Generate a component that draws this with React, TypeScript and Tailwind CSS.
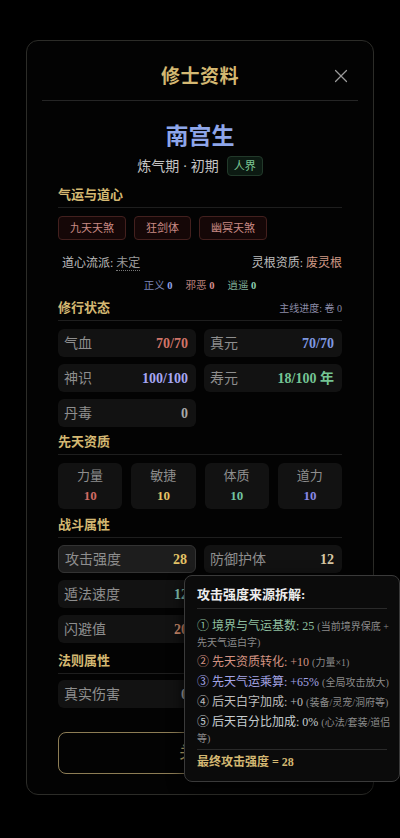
import React from 'react';
import { X } from 'lucide-react';

const FONT = { fontFamily: '"Liberation Serif", "Noto Sans CJK SC", serif' };

interface StatProps {
  label: string;
  value?: string;
  valueClass?: string;
  highlight?: boolean;
}

const StatCard: React.FC<StatProps> = ({ label, value, valueClass = '', highlight }) => (
  <div
    className={`h-[28px] rounded-md flex items-center justify-between pl-[6px] pr-2 ${
      highlight ? 'bg-[#1d1d1d] border border-[#333]' : 'bg-[#121212]'
    }`}
  >
    <span className="text-[14px] text-[#8e8e8e]">{label}</span>
    {value && <span className={`text-[14px] font-bold ${valueClass}`}>{value}</span>}
  </div>
);

const SectionTitle: React.FC<{ title: string; right?: React.ReactNode; className?: string }> = ({
  title,
  right,
  className = '',
}) => (
  <div className={`flex items-end justify-between border-b border-[#1e1e1e] pb-[3px] ${className}`}>
    <span className="text-[13px] leading-[18px] font-bold text-[#d4b872]">{title}</span>
    {right}
  </div>
);

const AptCard: React.FC<{ label: string; valueClass: string }> = ({ label, valueClass }) => (
  <div className="h-[46px] rounded-md bg-[#121212] flex flex-col items-center justify-center">
    <span className="text-[13px] leading-[18px] text-[#8e8e8e]">{label}</span>
    <span className={`text-[13px] leading-[18px] font-bold mt-[2px] ${valueClass}`}>10</span>
  </div>
);

const Line: React.FC<{ color: string; main: string; note: string }> = ({ color, main, note }) => (
  <p className={`text-[12px] leading-[16px] ${color}`}>
    {main} <span className="text-[10px] leading-[0px] text-[#8a8a8a]">{note}</span>
  </p>
);

export default function App() {
  return (
    <div className="w-[400px] h-[838px] bg-black relative overflow-hidden" style={FONT}>
      {/* Modal */}
      <div className="absolute left-[26px] top-[40px] w-[348px] h-[755px] rounded-xl border border-[#2c2c28] bg-[#030303] px-[15px]">
        {/* Header */}
        <div className="relative h-[60px] flex items-end justify-center pb-[11px] border-b border-[#252525]">
          <h2 className="text-[19px] leading-[24px] font-bold text-[#d4b872] tracking-wide">修士资料</h2>
          <X size={22} strokeWidth={1.3} className="absolute right-[6px] top-[24px] text-[#9a9a9a]" />
        </div>

        <div className="px-4">
          {/* Name */}
          <div className="mt-[22px] text-center text-[23px] leading-[28px] font-bold text-[#8ea6ea]">南宫生</div>
          <div className="mt-[5px] flex items-center justify-center gap-2 h-[20px]">
            <span className="text-[14px] text-[#c4c4c4]">炼气期 · 初期</span>
            <span className="text-[11px] leading-[16px] px-[6px] py-[1px] rounded border border-[#22392a] bg-[#0c1a12] text-[#7cc994]">
              人界
            </span>
          </div>

          {/* 气运与道心 */}
          <SectionTitle title="气运与道心" className="mt-[10px]" />
          <div className="mt-[8px] flex gap-2">
            {['九天天煞', '狂剑体', '幽冥天煞'].map(t => (
              <span
                key={t}
                className="h-[24px] px-[11px] flex items-center rounded border border-[#43201e] bg-[#150707] text-[11px] text-[#c98a84]"
              >
                {t}
              </span>
            ))}
          </div>
          <div className="mt-[13px] h-[20px] flex items-center justify-between pl-1 text-[12px]">
            <span className="text-[#bdbdbd]">
              道心流派: <span className="text-[#9a9a9a] border-b border-dotted border-[#777]">未定</span>
            </span>
            <span className="text-[#bdbdbd]">
              灵根资质: <span className="text-[#d29a86]">废灵根</span>
            </span>
          </div>
          <div className="mt-[5px] h-[16px] flex items-center justify-center gap-[13px] text-[10.5px]">
            <span className="text-[#7c86b8]">
              正义 <b className="text-[#93a5ec]">0</b>
            </span>
            <span className="text-[#b8807c]">
              邪恶 <b className="text-[#d89090]">0</b>
            </span>
            <span className="text-[#7ca892]">
              逍遥 <b className="text-[#8ed0b0]">0</b>
            </span>
          </div>

          {/* 修行状态 */}
          <SectionTitle
            title="修行状态"
            className="mt-[5px]"
            right={<span className="text-[10px] leading-[16px] text-[#8c8ca8]">主线进度: 卷 0</span>}
          />
          <div className="mt-[8px] grid grid-cols-2 gap-x-[8px] gap-y-[7px]">
            <StatCard label="气血" value="70/70" valueClass="text-[#d07468]" />
            <StatCard label="真元" value="70/70" valueClass="text-[#7f98e0]" />
            <StatCard label="神识" value="100/100" valueClass="text-[#a6a6f2]" />
            <StatCard label="寿元" value="18/100 年" valueClass="text-[#74c494]" />
            <StatCard label="丹毒" value="0" valueClass="text-[#a8a8a8]" />
          </div>

          {/* 先天资质 */}
          <SectionTitle title="先天资质" className="mt-[6px]" />
          <div className="mt-[8px] grid grid-cols-4 gap-[9px]">
            <AptCard label="力量" valueClass="text-[#d06a64]" />
            <AptCard label="敏捷" valueClass="text-[#e4c264]" />
            <AptCard label="体质" valueClass="text-[#72c4a0]" />
            <AptCard label="道力" valueClass="text-[#8888e6]" />
          </div>

          {/* 战斗属性 */}
          <SectionTitle title="战斗属性" className="mt-[7px]" />
          <div className="mt-[7px] grid grid-cols-2 gap-x-[8px] gap-y-[7px]">
            <StatCard label="攻击强度" value="28" valueClass="text-[#e2c266]" highlight />
            <StatCard label="防御护体" value="12" valueClass="text-[#d8c8a4]" />
            <StatCard label="遁法速度" value="12" valueClass="text-[#86c4b4]" />
            <div />
            <StatCard label="闪避值" value="20" valueClass="text-[#d08a6a]" />
          </div>

          {/* 法则属性 */}
          <SectionTitle title="法则属性" className="mt-[9px]" />
          <div className="mt-[6px] grid grid-cols-2 gap-x-[8px]">
            <StatCard label="真实伤害" value="0" valueClass="text-[#a8a8a8]" />
          </div>

          <button className="mt-[24px] w-full h-[42px] rounded-lg border border-[#8d7d55] text-[16px] text-[#d4b872] tracking-[0.3em]">
            关闭
          </button>
        </div>
      </div>

      {/* Tooltip */}
      <div className="absolute left-[184px] top-[575px] w-[216px] rounded-lg border border-[#3a3a3a] bg-[#0b0b0b] pl-[12px] pr-[6px] pt-[9px] pb-[10px] shadow-[0_4px_16px_rgba(0,0,0,0.8)]">
        <div className="text-[13px] leading-[20px] font-bold text-[#ececec] border-b border-[#2a2a2a] pb-[3px] mr-[6px]">
          攻击强度来源拆解:
        </div>
        <div className="mt-[9px] space-y-[4px]">
          <Line color="text-[#8fc0a0]" main="① 境界与气运基数: 25" note="(当前境界保底 + 先天气运白字)" />
          <Line color="text-[#d39282]" main="② 先天资质转化: +10" note="(力量×1)" />
          <Line color="text-[#a4a4e6]" main="③ 先天气运乘算: +65%" note="(全局攻击放大)" />
          <Line color="text-[#bcbcbc]" main="④ 后天白字加成: +0" note="(装备/灵宠/洞府等)" />
          <Line color="text-[#c6cdd0]" main="⑤ 后天百分比加成: 0%" note="(心法/套装/道侣等)" />
        </div>
        <div className="mt-[3px] mr-[6px] pt-[3px] border-t border-[#2a2a2a] text-[12px] leading-[18px] font-bold text-[#d4b872]">
          最终攻击强度 = 28
        </div>
      </div>
    </div>
  );
}
